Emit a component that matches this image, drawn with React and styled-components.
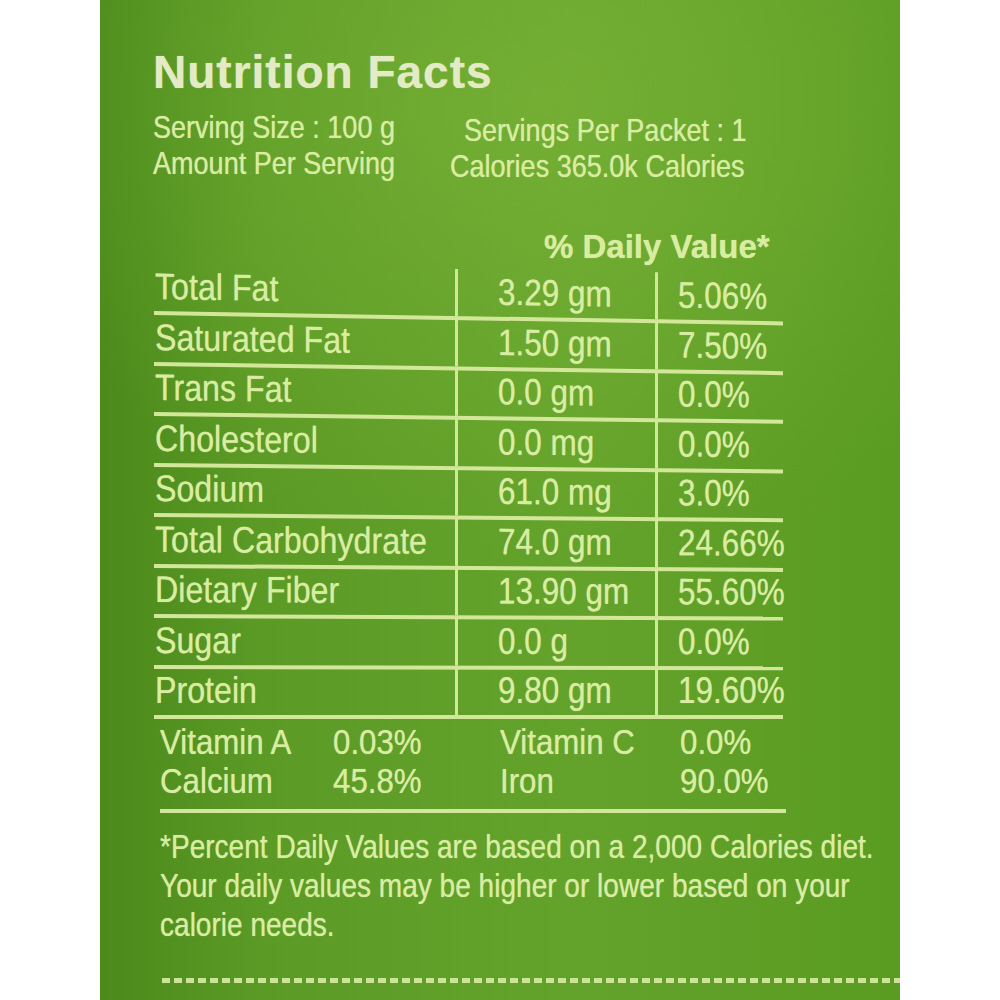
import React from 'react'
import styled, { createGlobalStyle } from 'styled-components'

const GlobalStyle = createGlobalStyle`
  html, body {
    margin: 0;
    padding: 0;
    background: #ffffff;
  }
`

const rows = [
  ['Total Fat', '3.29 gm', '5.06%'],
  ['Saturated Fat', '1.50 gm', '7.50%'],
  ['Trans Fat', '0.0 gm', '0.0%'],
  ['Cholesterol', '0.0 mg', '0.0%'],
  ['Sodium', '61.0 mg', '3.0%'],
  ['Total Carbohydrate', '74.0 gm', '24.66%'],
  ['Dietary Fiber', '13.90 gm', '55.60%'],
  ['Sugar', '0.0 g', '0.0%'],
  ['Protein', '9.80 gm', '19.60%'],
]

const vitamins = [
  ['Vitamin A', '0.03%', 'Vitamin C', '0.0%'],
  ['Calcium', '45.8%', 'Iron', '90.0%'],
]

const footnote = [
  '*Percent Daily Values are based on a 2,000 Calories diet.',
  'Your daily values may be higher or lower based on your',
  'calorie needs.',
]

// the label is photographed a little in perspective: top rows lean more
const tiltFor = i => (0.95 * (rows.length - 1 - i)) / (rows.length - 1)

const App = () => {
  return (
    <>
      <GlobalStyle />
      <Page>
        <Panel>
          <Content>
            <Title>Nutrition Facts</Title>
            <Info>
              <Narrow>Serving Size : 100 g</Narrow>
              <InfoRight indent={14}><Narrow>Servings Per Packet : 1</Narrow></InfoRight>
              <Narrow>Amount Per Serving</Narrow>
              <InfoRight indent={0}><Narrow>Calories 365.0k Calories</Narrow></InfoRight>
            </Info>
            <DailyHeader>% Daily Value*</DailyHeader>
            <Table>
              {rows.map(([name, amount, pct], i) => (
                <Row key={name} tilt={tiltFor(i)}>
                  <Cell><Narrow sx={0.87}>{name}</Narrow></Cell>
                  <Cell divider pad={40}><Narrow sx={0.85}>{amount}</Narrow></Cell>
                  <Cell divider pad={20}><Narrow sx={0.85}>{pct}</Narrow></Cell>
                </Row>
              ))}
            </Table>
            <Vitamins>
              {vitamins.map(v => v.map((t, i) => <Narrow key={t + i} sx={0.893}>{t}</Narrow>))}
            </Vitamins>
            <Rule />
            <Footnote>
              {footnote.map(line => (
                <div key={line}><Narrow sx={0.85}>{line}</Narrow></div>
              ))}
            </Footnote>
          </Content>
          <Dotted />
        </Panel>
      </Page>
    </>
  )
}

const Page = styled.div`
  width: 1000px;
  height: 1000px;
  display: flex;
  justify-content: center;
  overflow: hidden;
`

const Panel = styled.div`
  width: 800px;
  height: 1000px;
  display: flex;
  flex-direction: column;
  overflow: hidden;
  background:
    radial-gradient(ellipse 70% 45% at 55% 10%, rgba(130, 185, 60, 0.55), rgba(130, 185, 60, 0) 100%),
    linear-gradient(90deg, #4b8a1b 0%, #5b9a25 20%, #64a32b 60%, #5a9b22 100%);
  color: #d9eda2;
  font-family: "Liberation Sans", Arial, sans-serif;
  text-shadow: 0 0 1px rgba(220, 239, 166, 0.7);
`

const Content = styled.div`
  display: flex;
  flex-direction: column;
  padding: 49px 0 0 53px;
`

const Narrow = styled.span`
  display: inline-block;
  white-space: nowrap;
  transform: scaleX(${p => p.sx || 0.845});
  transform-origin: left center;
`

const Title = styled.div`
  font-weight: 700;
  font-size: 46px;
  line-height: 46px;
  letter-spacing: 1px;
  color: #e2ebc6;
`

const Info = styled.div`
  display: grid;
  grid-template-columns: 297px auto;
  font-size: 32px;
  line-height: 36px;
  margin-top: 14px;
`

const InfoRight = styled.span`
  padding: 3px 0 0 ${p => p.indent}px;
  margin-bottom: -3px;
`

const DailyHeader = styled.div`
  font-weight: 700;
  font-size: 33px;
  line-height: 34px;
  margin: 49px 0 0 391px;
`

const Table = styled.div`
  display: flex;
  flex-direction: column;
  width: 629px;
  margin-left: 1px;
`

const Row = styled.div`
  display: grid;
  grid-template-columns: 301px 200px 128px;
  height: 50.5px;
  border-bottom: 4px solid #d3e79b;
  box-sizing: border-box;
  transform: skewY(${p => p.tilt}deg);
  transform-origin: left center;
`

const Cell = styled.div`
  display: flex;
  align-items: center;
  font-size: 37px;
  padding-left: ${p => p.pad || 1}px;
  border-left: ${p => (p.divider ? '3px solid #d3e79b' : 'none')};
`

const Vitamins = styled.div`
  display: grid;
  grid-template-columns: 173px 167px 180px auto;
  font-size: 35px;
  line-height: 39px;
  padding: 3px 0 0 7px;
`

const Rule = styled.div`
  width: 626px;
  height: 4px;
  margin: 9px 0 0 7px;
  background: #d3e79b;
`

const Footnote = styled.div`
  font-size: 33px;
  line-height: 39px;
  padding: 14px 0 0 7px;
`

const Dotted = styled.div`
  width: 738px;
  height: 5px;
  margin: auto 0 17px 62px;
  background: repeating-linear-gradient(90deg, #cde397 0 8px, transparent 8px 12px);
`

export default App
